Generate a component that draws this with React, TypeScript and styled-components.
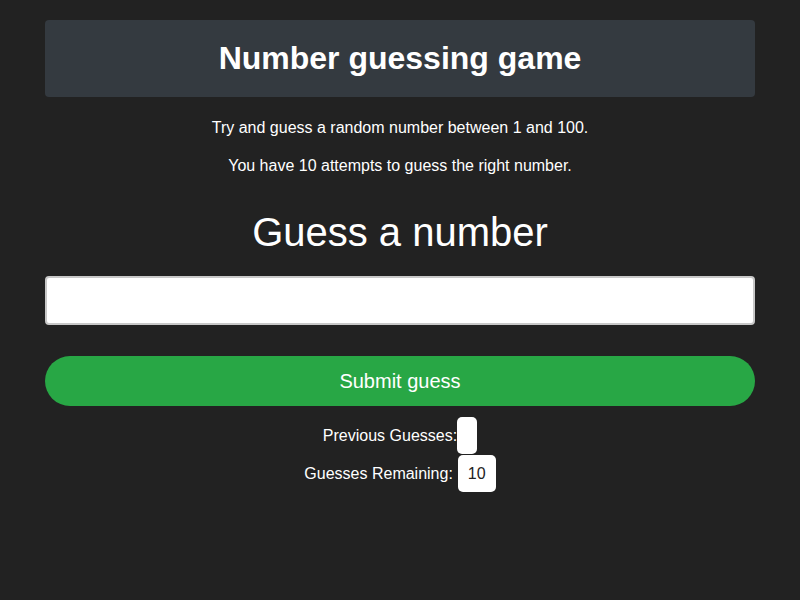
import styled, { createGlobalStyle } from "styled-components";

const GlobalStyle = createGlobalStyle`
  html, body {
    margin: 0;
    padding: 0;
    background-color: #222222;
    color: #ffffff;
    font-family: "Liberation Sans", Arial, sans-serif;
  }
`;

const Page = styled.div`
  padding: 20px 45px;
  text-align: center;
`;

const Header = styled.div`
  background-color: #343a40;
  border-radius: 4px;
  height: 77px;
  display: flex;
  align-items: center;
  justify-content: center;

  h1 {
    margin: 0;
    font-size: 32px;
    font-weight: bold;
  }
`;

const Intro = styled.p`
  font-size: 16px;
  margin: 22px 0 0;
  line-height: 18px;

  & + & {
    margin-top: 20px;
  }
`;

const Heading = styled.h2`
  font-size: 40px;
  font-weight: normal;
  margin: 34px 0 0;
  line-height: 46px;
`;

const GuessInput = styled.input`
  display: block;
  box-sizing: border-box;
  width: 100%;
  height: 49px;
  margin-top: 21px;
  border: 2px solid #c8c8c8;
  border-radius: 4px;
  background: #ffffff;
  font-size: 20px;
  outline: none;
`;

const SubmitButton = styled.button`
  display: block;
  width: 100%;
  height: 50px;
  margin-top: 31px;
  border: none;
  border-radius: 25px;
  background-color: #28a745;
  color: #ffffff;
  font-family: "Liberation Sans", Arial, sans-serif;
  font-size: 20px;
`;

const Stats = styled.div`
  margin-top: 11px;
  display: flex;
  flex-direction: column;
  align-items: center;
  gap: 1px;
`;

const StatRow = styled.div`
  display: flex;
  align-items: center;
  font-size: 16px;
`;

const StatValue = styled.span<{ $gap?: boolean }>`
  display: inline-block;
  min-height: 19px;
  margin-left: ${(p) => (p.$gap ? "5px" : "0")};
  padding: 9px 10px;
  background: #ffffff;
  color: #222222;
  border-radius: 5px;
  font-size: 16px;
  line-height: 19px;
`;

export default function App() {
  return (
    <>
      <GlobalStyle />
      <Page>
        <Header>
          <h1>Number guessing game</h1>
        </Header>
        <Intro>Try and guess a random number between 1 and 100.</Intro>
        <Intro>You have 10 attempts to guess the right number.</Intro>
        <Heading>Guess a number</Heading>
        <GuessInput type="text" />
        <SubmitButton>Submit guess</SubmitButton>
        <Stats>
          <StatRow>
            Previous Guesses:<StatValue></StatValue>
          </StatRow>
          <StatRow>
            Guesses Remaining:<StatValue $gap>10</StatValue>
          </StatRow>
        </Stats>
      </Page>
    </>
  );
}
